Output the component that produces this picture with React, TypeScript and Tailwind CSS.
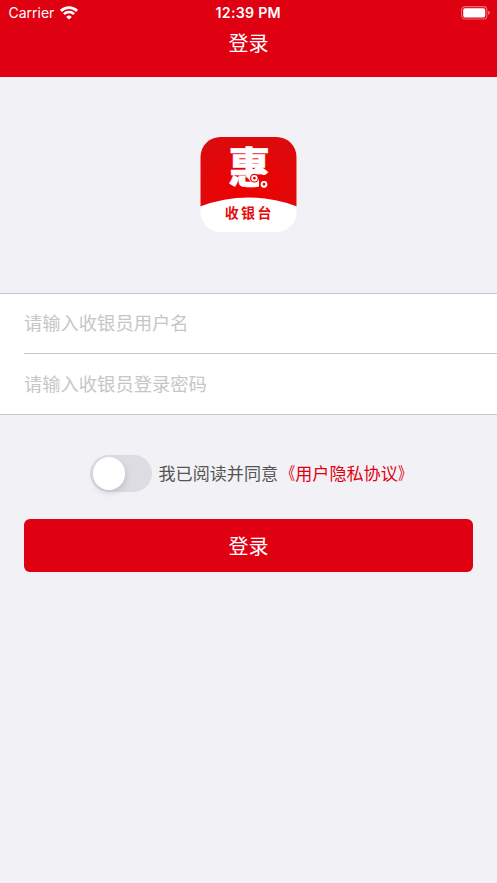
import React from 'react';

function WifiIcon() {
  return (
    <svg width="18" height="14" viewBox="0 0 18 14" className="block" fill="none" stroke="white">
      <path d="M0.9 4.9 A11.6 11.6 0 0 1 17.1 4.9" strokeWidth="2.8" />
      <path d="M3.9 8.1 A7.4 7.4 0 0 1 14.1 8.1" strokeWidth="2.6" />
      <path d="M9 13.6 L6.2 10.9 A4 4 0 0 1 11.8 10.9 Z" fill="white" stroke="none" />
    </svg>
  );
}

function BatteryIcon() {
  return (
    <svg width="29" height="14" viewBox="0 0 29 14" className="block">
      <rect x="0.6" y="0.6" width="25.2" height="12.4" rx="3.2" fill="none" stroke="white" strokeOpacity="0.42" strokeWidth="1.1" />
      <rect x="2.2" y="2.2" width="22" height="9.2" rx="1.7" fill="white" />
      <path d="M27.1 4.7 Q28.8 5.4 28.8 6.8 Q28.8 8.2 27.1 8.9 Z" fill="white" fillOpacity="0.5" />
    </svg>
  );
}

function Logo() {
  return (
    <svg width="97" height="96" viewBox="0 0 97 96" className="block">
      <defs>
        <radialGradient id="logoRed" cx="0.5" cy="0.7" r="0.65">
          <stop offset="0" stopColor="#f00000" />
          <stop offset="1" stopColor="#dc0a0c" />
        </radialGradient>
        <clipPath id="logoShape">
          <rect x="0.5" y="0" width="96" height="95" rx="20" />
        </clipPath>
      </defs>
      <g clipPath="url(#logoShape)">
        <rect width="97" height="96" fill="white" />
        <path d="M0 0 H97 V69.5 Q48.5 51.5 0 69.5 Z" fill="url(#logoRed)" />
      </g>
      <text x="49.5" y="46.3" textAnchor="middle" fill="white" stroke="white" strokeWidth="0.5" className="font-['Noto_Sans_CJK_SC',sans-serif] text-[42px] font-black">惠</text>
      <rect x="59" y="38" width="13" height="15" fill="#e60505" />
      <circle cx="54.4" cy="41.2" r="4.4" fill="#ea0404" />
      <circle cx="54.4" cy="41.2" r="2.3" fill="none" stroke="white" strokeWidth="1.8" />
      <circle cx="64" cy="47.3" r="2.4" fill="none" stroke="white" strokeWidth="1.9" />
      <text x="49.3" y="81.3" textAnchor="middle" fill="#e60c0c" className="font-['Noto_Sans_CJK_SC',sans-serif] text-[14px] font-bold tracking-[2.4px]">收银台</text>
    </svg>
  );
}

export default function App() {
  return (
    <div className="flex h-[883px] w-[497px] flex-col overflow-hidden bg-[#f2f1f6] font-['Inter','Noto_Sans_CJK_SC',sans-serif]">
      <header className="h-[77px] shrink-0 bg-[#df0011] text-white">
        <div className="grid h-[26px] grid-cols-3 items-center pl-[8.5px] pr-[7px]">
          <div className="flex items-center gap-[6px]">
            <span className="text-[14px] leading-[26px]">Carrier</span>
            <WifiIcon />
          </div>
          <div className="whitespace-nowrap pr-[2px] text-center text-[14.2px] font-semibold leading-[26px] tracking-[0.25px]">12:39 PM</div>
          <div className="flex justify-end"><BatteryIcon /></div>
        </div>
        <h1 className="pt-px text-center text-[20px] font-normal leading-[34px]">登录</h1>
      </header>

      <main>
        <div className="flex justify-center pb-[60px] pt-[60px]">
          <Logo />
        </div>
        <form>
          <div className="h-[122px] border-y border-[#c8c7cc] bg-white pl-6">
            <input
              className="block h-[60px] w-full border-b border-[#c8c7cc] pb-[2px] text-[18.3px] outline-none placeholder:text-[#c6c6c8] placeholder:opacity-100"
              placeholder="请输入收银员用户名"
            />
            <input
              className="block h-[60px] w-full text-[18.3px] outline-none placeholder:text-[#c6c6c8] placeholder:opacity-100"
              placeholder="请输入收银员登录密码"
            />
          </div>
          <div className="mt-10 flex h-[37px] items-center pl-[90px]">
            <button type="button" aria-label="同意" className="flex h-[37px] w-[61.5px] items-center rounded-full bg-[#dddce2] pl-[2.5px]">
              <span className="block h-[32.5px] w-[32.5px] rounded-full bg-white shadow-[1px_3px_6px_rgba(0,0,0,0.12)]" />
            </button>
            <div className="ml-[7px] whitespace-nowrap text-[17.1px] leading-[37px] text-[#555555]">
              我已阅读并同意
              <a className="text-[#df0011]">
                <span className="inline-block origin-right scale-x-[0.8]">《</span>用户隐私协议<span className="inline-block origin-left scale-x-[0.8]">》</span>
              </a>
            </div>
          </div>
          <button type="button" className="ml-6 mt-[27px] block h-[53px] w-[449px] rounded-[6px] bg-[#df0011] pt-[3px] text-center text-[20px] text-white">登录</button>
        </form>
      </main>
    </div>
  );
}
